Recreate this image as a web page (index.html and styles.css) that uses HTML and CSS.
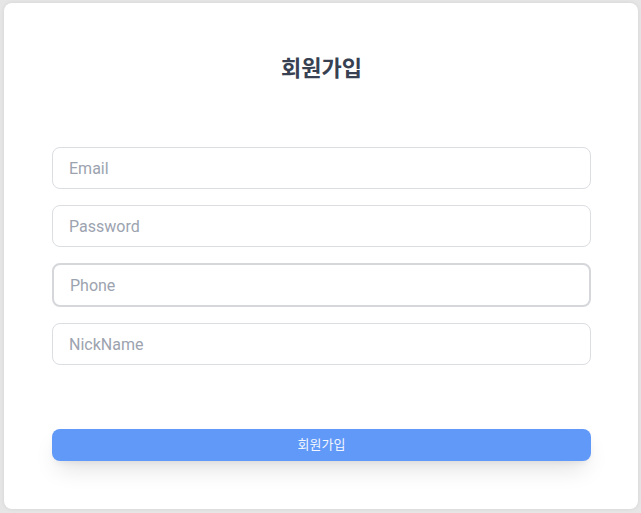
FILE: index.html
```html
<!DOCTYPE html>
<html lang="ko">
<head>
<meta charset="utf-8">
<link rel="stylesheet" href="styles.css">
</head>
<body>
<div class="page">
  <form class="card">
    <h1 class="title">회원가입</h1>
    <div class="fields">
      <input class="field" type="email" placeholder="Email">
      <input class="field" type="password" placeholder="Password">
      <input class="field field-active" type="text" placeholder="Phone">
      <input class="field" type="text" placeholder="NickName">
    </div>
    <button class="submit" type="button">회원가입</button>
  </form>
</div>
</body>
</html>
```

FILE: styles.css
```css
* { box-sizing: border-box; }
html, body { margin: 0; height: 100%; }
body {
  background: #e6e6e6;
  font-family: Roboto, "Noto Sans CJK KR", sans-serif;
}
.page {
  padding: 3px 3px 4px 4px;
  height: 100%;
}
.card {
  background: #fff;
  border-radius: 8px;
  height: 100%;
  padding: 47px 47px 48px 48px;
  display: flex;
  flex-direction: column;
  box-shadow: 0 0 4px rgba(0,0,0,0.08);
}
.title {
  margin: 0;
  text-align: center;
  font-family: "Noto Sans CJK KR", sans-serif;
  font-size: 22px;
  line-height: 32px;
  font-weight: 700;
  color: #374151;
}
.fields {
  margin-top: 65px;
  display: flex;
  flex-direction: column;
  gap: 16px;
}
.field {
  height: 42px;
  border: 1px solid #dcdee2;
  border-radius: 8px;
  padding: 0 16px;
  font-family: Roboto, sans-serif;
  font-size: 16px;
  color: #374151;
  outline: none;
  background: #fff;
}
.field::placeholder { color: #9ca3af; }
.field-active {
  height: 44px;
  border: 2px solid #d6d7db;
}
.submit {
  margin-top: 64px;
  height: 32px;
  padding: 0 0 3px;
  border: none;
  border-radius: 8px;
  background: #6199f8;
  color: #f3f6fd;
  font-family: "Noto Sans CJK KR", sans-serif;
  font-size: 13px;
  line-height: 16px;
  box-shadow: 0 12px 24px -6px rgba(0,0,0,0.14), 0 4px 8px -4px rgba(0,0,0,0.1);
}
```
